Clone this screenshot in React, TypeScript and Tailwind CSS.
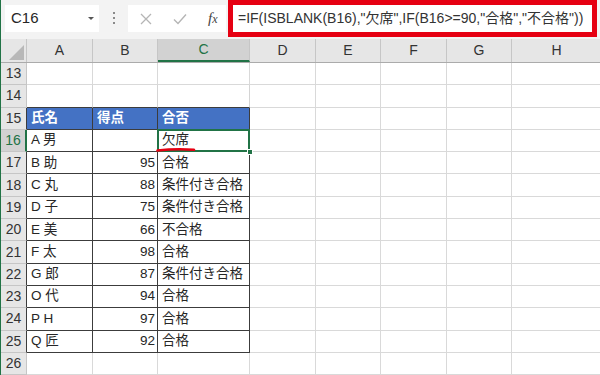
import React from "react";

const cols = [
  { name: "A", w: "w-[66px]" },
  { name: "B", w: "w-[65px]" },
  { name: "C", w: "w-[92px]" },
  { name: "D", w: "w-[66px]" },
  { name: "E", w: "w-[65px]" },
  { name: "F", w: "w-[66px]" },
  { name: "G", w: "w-[65px]" },
  { name: "H", w: "w-[90px]" },
];

const data: Record<number, string[]> = {
  16: ["A 男", "", "欠席"],
  17: ["B 助", "95", "合格"],
  18: ["C 丸", "88", "条件付き合格"],
  19: ["D 子", "75", "条件付き合格"],
  20: ["E 美", "66", "不合格"],
  21: ["F 太", "98", "合格"],
  22: ["G 郎", "87", "条件付き合格"],
  23: ["O 代", "94", "合格"],
  24: ["P H", "97", "合格"],
  25: ["Q 匠", "92", "合格"],
};

const rows = [13, 14, 15, 16, 17, 18, 19, 20, 21, 22, 23, 24, 25, 26];

function Cell({ row, col }: { row: number; col: number }) {
  const inTable = row >= 15 && row <= 25 && col < 3;
  const aboveTable = row === 14 && col < 3;
  const w = cols[col].w;
  const border = inTable
    ? "border-r border-b border-[#3c3c3c]"
    : aboveTable
      ? "border-r border-b border-r-[#d4d4d4] border-b-[#3c3c3c]"
      : "border-r border-b border-[#d9d9d9]";

  if (row === 15 && col < 3) {
    const head = ["氏名", "得点", "合否"][col];
    return (
      <div className={`${w} h-full shrink-0 ${border} bg-[#4472c4] text-white font-bold flex items-center pl-[4px]`}>
        {head}
      </div>
    );
  }

  const value = inTable ? data[row]?.[col] ?? "" : "";
  const isActive = row === 16 && col === 2;

  return (
    <div
      className={`${w} h-full shrink-0 ${border} flex items-center relative ${
        col === 1 ? "justify-end pr-[2px]" : "pl-[4px]"
      } text-[#262626]`}
    >
      {value}
      {isActive && (
        <>
          <div className="absolute -left-[1px] -top-[1px] -right-[1px] -bottom-[1px] border-2 border-[#217346] z-10" />
          <div className="absolute -right-[4px] -bottom-[4px] w-[6px] h-[6px] bg-[#217346] border border-white z-20" />
          <svg className="absolute left-[-2px] top-[17px] z-20" width="40" height="6" viewBox="0 0 40 6">
            <path d="M1.5 3.5 Q 20 1.5 38 2.8" stroke="#e60012" strokeWidth="2.6" fill="none" strokeLinecap="round" />
          </svg>
        </>
      )}
    </div>
  );
}

export default function App() {
  return (
    <div
      className="w-[600px] h-[375px] overflow-hidden bg-white border-l border-[#217346] text-[13.5px]"
      style={{ fontFamily: '"Liberation Sans", "Noto Sans CJK JP", sans-serif' }}
    >
      {/* formula bar */}
      <div className="h-[39px] bg-[#f3f3f3] flex items-start">
        <div className="ml-[4px] mt-[5px] w-[94px] h-[27px] bg-white flex items-center justify-between pl-[6px] pr-[5px]">
          <span className="text-[15px] text-[#262626]">C16</span>
          <span className="w-0 h-0 border-l-[3px] border-r-[3px] border-t-[3px] border-l-transparent border-r-transparent border-t-[#555]" />
        </div>
        <div className="w-[29px] h-[36px] flex flex-col items-center justify-center gap-[3px]">
          <span className="w-[2px] h-[2px] bg-[#8a8a8a]" />
          <span className="w-[2px] h-[2px] bg-[#8a8a8a]" />
          <span className="w-[2px] h-[2px] bg-[#8a8a8a]" />
        </div>
        <div className="mt-[5px] w-[98px] h-[27px] bg-white flex items-center pl-[12px]">
          <svg width="12" height="12" viewBox="0 0 12 12">
            <path d="M1 1 L11 11 M11 1 L1 11" stroke="#b5b5b5" strokeWidth="1.3" />
          </svg>
          <svg className="ml-[21px]" width="14" height="12" viewBox="0 0 14 12">
            <path d="M1 6.5 L5 10.5 L13 1.5" stroke="#b5b5b5" strokeWidth="1.4" fill="none" />
          </svg>
          <span
            className="ml-[21px] text-[15px] italic text-[#444]"
            style={{ fontFamily: '"Liberation Serif", serif' }}
          >
            f<span className="text-[12px]">x</span>
          </span>
        </div>
        <div className="ml-[2px] w-[369px] h-[37px] border-[5px] border-[#e60012] bg-white flex items-center pl-[5px]">
          <span className="text-[14px] text-[#333] whitespace-nowrap">
            =IF(ISBLANK(B16),"欠席",IF(B16&gt;=90,"合格","不合格"))
          </span>
        </div>
      </div>

      {/* column header */}
      <div className="h-[24px] flex bg-[#e6e6e6] border-b border-[#ababab]">
        <div className="w-[26px] shrink-0 h-full border-r border-[#c6c6c6] flex items-end justify-end p-[2px]">
          <svg width="15" height="15" viewBox="0 0 15 15">
            <path d="M15 0 L15 15 L0 15 Z" fill="#b8b8b8" />
          </svg>
        </div>
        {cols.map((c) => (
          <div
            key={c.name}
            className={`${c.w} shrink-0 h-full border-r border-[#c6c6c6] flex items-center justify-center text-[14px] ${
              c.name === "C"
                ? "bg-[#d2d2d2] text-[#217346] border-b-2 border-b-[#217346]"
                : "text-[#333]"
            }`}
          >
            {c.name}
          </div>
        ))}
      </div>

      {/* rows */}
      {rows.map((r) => (
        <div key={r} className="h-[22.3px] flex">
          <div
            className={`w-[26px] shrink-0 h-full flex items-center justify-center text-[14px] border-b border-[#c6c6c6] ${
              r === 16
                ? "bg-[#d2d2d2] text-[#217346] border-r-2 border-r-[#217346]"
                : r >= 15 && r <= 25
                  ? "bg-[#e6e6e6] text-[#333] border-r border-r-[#3c3c3c]"
                  : "bg-[#e6e6e6] text-[#333] border-r border-r-[#c6c6c6]"
            }`}
          >
            {r}
          </div>
          {cols.map((c, i) => (
            <Cell key={c.name} row={r} col={i} />
          ))}
        </div>
      ))}
    </div>
  );
}
